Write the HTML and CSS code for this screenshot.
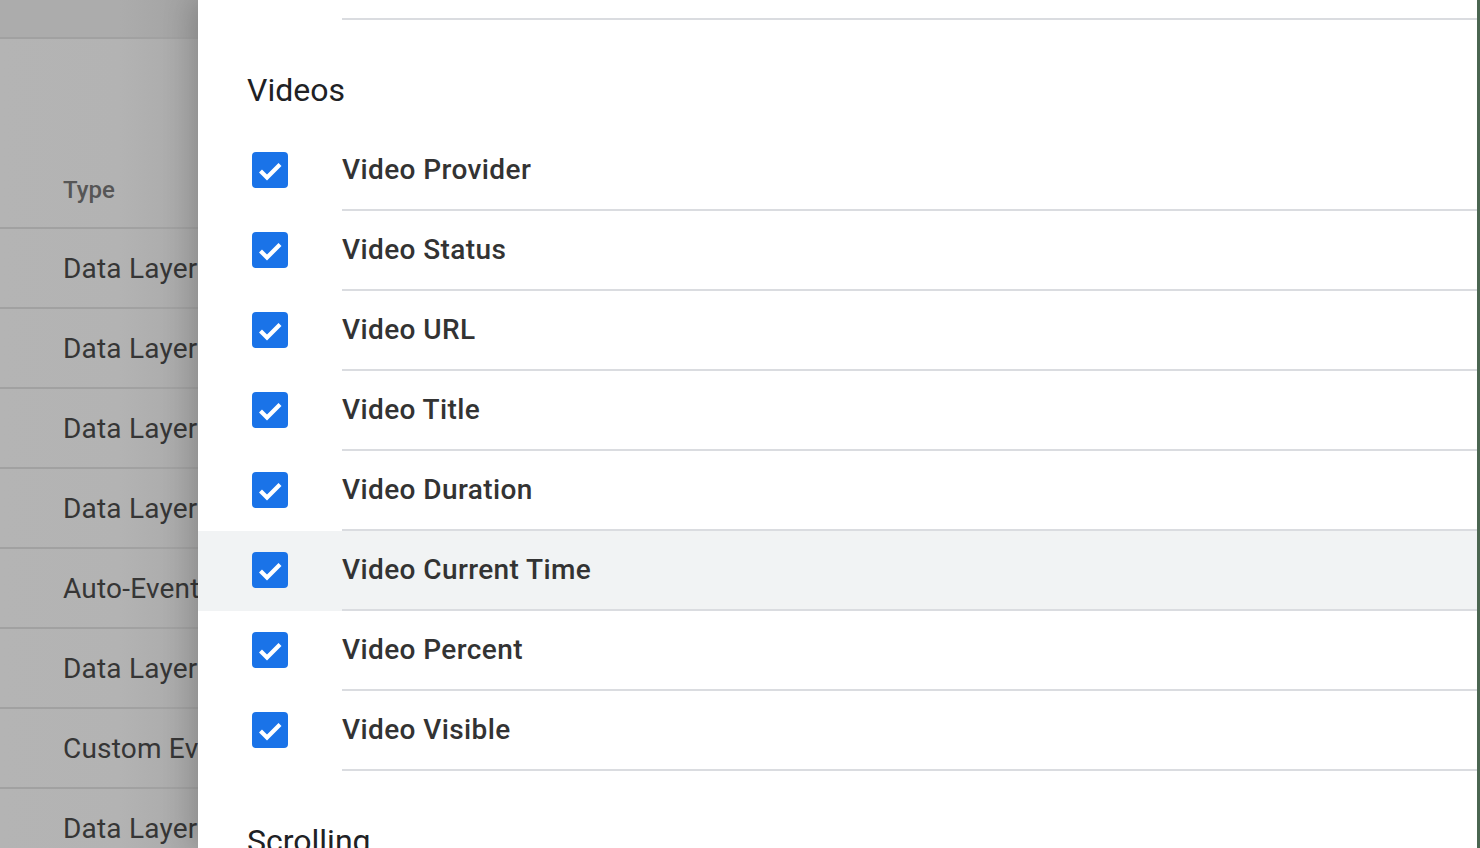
FILE: index.html
```html
<!DOCTYPE html>
<html>
<head>
<meta charset="utf-8">
<link rel="stylesheet" href="styles.css">
</head>
<body>
<div class="screen">
  <aside class="bg-table">
    <div class="bg-top"></div>
    <div class="bg-head"><span>Type</span></div>
    <div class="bg-row">Data Layer Variable</div>
    <div class="bg-row">Data Layer Variable</div>
    <div class="bg-row">Data Layer Variable</div>
    <div class="bg-row">Data Layer Variable</div>
    <div class="bg-row">Auto-Event Variable</div>
    <div class="bg-row">Data Layer Variable</div>
    <div class="bg-row">Custom Event</div>
    <div class="bg-row">Data Layer Variable</div>
  </aside>
  <main class="drawer">
    <div class="prev-row"><div class="line-cell"></div></div>
    <h2 class="section-title">Videos</h2>
    <ul class="list">
      <li class="item"><span class="cb"><svg viewBox="0 0 36 36"><path d="M8.5 19l6.5 6.5 13-13"/></svg></span><span class="label">Video Provider</span></li>
      <li class="item"><span class="cb"><svg viewBox="0 0 36 36"><path d="M8.5 19l6.5 6.5 13-13"/></svg></span><span class="label">Video Status</span></li>
      <li class="item"><span class="cb"><svg viewBox="0 0 36 36"><path d="M8.5 19l6.5 6.5 13-13"/></svg></span><span class="label">Video URL</span></li>
      <li class="item"><span class="cb"><svg viewBox="0 0 36 36"><path d="M8.5 19l6.5 6.5 13-13"/></svg></span><span class="label">Video Title</span></li>
      <li class="item"><span class="cb"><svg viewBox="0 0 36 36"><path d="M8.5 19l6.5 6.5 13-13"/></svg></span><span class="label">Video Duration</span></li>
      <li class="item is-hover"><span class="cb"><svg viewBox="0 0 36 36"><path d="M8.5 19l6.5 6.5 13-13"/></svg></span><span class="label">Video Current Time</span></li>
      <li class="item"><span class="cb"><svg viewBox="0 0 36 36"><path d="M8.5 19l6.5 6.5 13-13"/></svg></span><span class="label">Video Percent</span></li>
      <li class="item"><span class="cb"><svg viewBox="0 0 36 36"><path d="M8.5 19l6.5 6.5 13-13"/></svg></span><span class="label">Video Visible</span></li>
    </ul>
    <h2 class="section-title next">Scrolling</h2>
  </main>
</div>
</body>
</html>
```

FILE: styles.css
```css
* { box-sizing: border-box; }
html, body { margin: 0; padding: 0; }
body {
  width: 1480px;
  height: 848px;
  overflow: hidden;
  font-family: Roboto, "Liberation Sans", sans-serif;
  background: #b3b3b3;
}
.screen {
  display: flex;
  width: 1480px;
  height: 848px;
  overflow: hidden;
}
.bg-table {
  width: 198px;
  flex: none;
  overflow: hidden;
  white-space: nowrap;
  background: linear-gradient(to right, #b4b4b4 0, #b3b3b3 120px, #a9a9a9 198px);
}
.bg-top {
  height: 39px;
  background: rgba(0,0,0,0.04);
  border-bottom: 2px solid #a1a1a1;
}
.bg-head {
  height: 190px;
  display: flex;
  align-items: flex-end;
  padding: 0 0 23px 63px;
  border-bottom: 2px solid #a1a1a1;
  font-size: 24px;
  font-weight: 500;
  color: #565656;
  line-height: 28px;
}
.bg-row {
  height: 80px;
  display: flex;
  align-items: center;
  padding-left: 63px;
  border-bottom: 2px solid #a1a1a1;
  font-size: 28px;
  color: #363636;
  letter-spacing: 0.2px;
}
.drawer {
  position: relative;
  z-index: 1;
  flex: 1;
  background: #fff;
  border-right: 3px solid #4b6651;
  box-shadow: -6px 0 28px rgba(0,0,0,0.18);
}
.prev-row {
  height: 20px;
  padding-left: 144px;
}
.line-cell {
  height: 20px;
  border-bottom: 2px solid #dadce0;
}
.section-title {
  margin: 50px 0 0 49px;
  height: 40px;
  line-height: 40px;
  font-size: 32px;
  font-weight: 400;
  color: #202124;
}
.list {
  list-style: none;
  margin: 21px 0 0;
  padding: 0;
}
.item {
  display: flex;
  align-items: stretch;
  height: 80px;
  padding-left: 54px;
}
.item.is-hover { background: #f1f3f4; }
.cb {
  flex: none;
  align-self: center;
  width: 36px;
  height: 36px;
  margin-top: -2px;
  margin-right: 54px;
  border-radius: 4px;
  background: #1a73e8;
  display: flex;
}
.cb svg {
  width: 36px;
  height: 36px;
}
.cb path {
  fill: none;
  stroke: #fff;
  stroke-width: 4.2;
  stroke-linecap: butt;
  stroke-linejoin: miter;
}
.label {
  flex: 1;
  display: flex;
  align-items: center;
  padding-bottom: 2px;
  border-bottom: 2px solid #dadce0;
  font-size: 28px;
  font-weight: 500;
  color: #333;
  letter-spacing: 0.4px;
}
.section-title.next {
  margin-top: 50px;
}
```
